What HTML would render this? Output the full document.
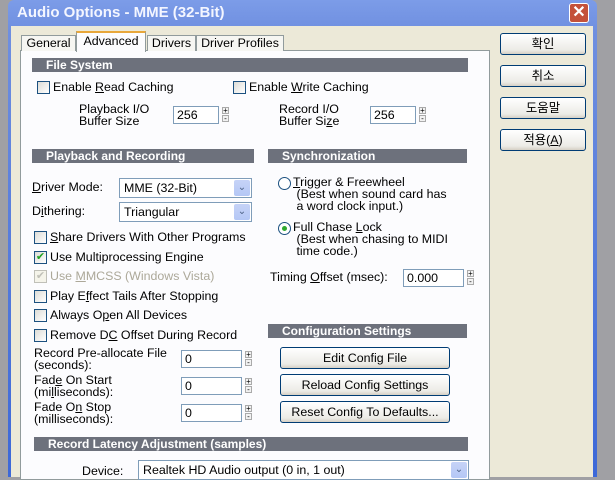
<!DOCTYPE html>
<html><head><style>
*{box-sizing:border-box}
body{margin:0;width:615px;height:477px;overflow:hidden;background:#a0a0a4;font-family:"Liberation Sans","Noto Sans CJK KR",sans-serif;font-size:12.4px;color:#000;position:relative}
.a{position:absolute;white-space:nowrap}
.hd{position:absolute;background:#6d717c;color:#fff;font-weight:bold;font-size:12px;padding-left:14px;line-height:14px;height:14px}
.cb{position:absolute;width:13px;height:13px;border:1px solid #1c5180;background:linear-gradient(135deg,#dcdcd7,#fff)}
.ed{position:absolute;background:#fff;border:1px solid #7f9db9;padding-left:3px;line-height:16px;height:18px}
.sp{position:absolute;width:7px;height:16px;font-size:8px;line-height:7px;text-align:center;color:#000}
.sp div{height:7px;border:1px solid #aaa;background:#f2f2f2;margin-bottom:1px;line-height:5px}
.btn{position:absolute;border:1px solid #003c74;border-radius:3px;background:linear-gradient(#fff,#ecebe6 80%,#d6d0c5);text-align:center;line-height:20px;height:22px}
.dd{position:absolute;background:#fff;border:1px solid #7f9db9;padding-left:4px;line-height:18px;height:20px}
.dd i{position:absolute;right:1px;top:1px;width:16px;height:16px;background:linear-gradient(#c6d3f7,#b4c7f5);border-radius:2px;font-style:normal;color:#4d6185;font-size:10px;text-align:center;line-height:16px}
.rd{position:absolute;width:13px;height:13px;border:1px solid #1c5180;border-radius:50%;background:#fff}
u{text-decoration:underline}
</style></head><body>
<div class="a" style="left:8px;top:0;width:589px;height:477px;border-radius:6px 6px 0 0;background:linear-gradient(#7c9ce8,#6f8fe0 30px,#3c68d8)"></div>
<div class="a" style="left:11px;top:26px;width:582px;height:451px;background:#ece9d8"></div>
<div class="a" style="left:17px;top:2px;color:#f4f6ff;font-weight:bold;font-size:15px;line-height:22px">Audio Options - MME (32-Bit)</div>
<div class="a" style="left:569px;top:3px;width:20px;height:20px;border:1px solid #fff;border-radius:3px;background:#c4513a;color:#fff;font-size:16px;font-weight:bold;text-align:center;line-height:18px">✕</div>
<div class="a" style="left:20px;top:50px;width:470px;height:430px;background:#fcfcfe;border:1px solid #919b9c"></div>
<div class="a" style="left:21px;top:35px;width:55px;height:16px;border:1px solid #919b9c;border-bottom:none;background:#f6f6f2;text-align:center;line-height:15px">General</div>
<div class="a" style="left:76px;top:31px;width:70px;height:21px;border:1px solid #919b9c;border-top:2px solid #e8a73a;border-bottom:none;background:#fcfcfe;text-align:center;line-height:17px">Advanced</div>
<div class="a" style="left:147px;top:35px;width:49px;height:16px;border:1px solid #919b9c;border-bottom:none;background:#f6f6f2;text-align:center;line-height:15px">Drivers</div>
<div class="a" style="left:196px;top:35px;width:88px;height:16px;border:1px solid #919b9c;border-bottom:none;background:#f6f6f2;text-align:center;line-height:15px">Driver Profiles</div>
<div class="btn" style="left:500px;top:33px;width:86px">확인</div>
<div class="btn" style="left:500px;top:65px;width:86px">취소</div>
<div class="btn" style="left:500px;top:97px;width:86px">도움말</div>
<div class="btn" style="left:500px;top:129px;width:86px">적용(<u>A</u>)</div>
<div class="hd" style="left:32px;top:58px;width:436px">File System</div>
<div class="cb" style="left:37px;top:81px"></div><div class="a" style="left:53px;top:80px">Enable <u>R</u>ead Caching</div>
<div class="cb" style="left:233px;top:81px"></div><div class="a" style="left:249px;top:80px">Enable <u>W</u>rite Caching</div>
<div class="a" style="left:79px;top:103px;line-height:12px">Playback I/O<br>Buffer Size</div>
<div class="ed" style="left:173px;top:106px;width:46px">256</div>
<div class="sp" style="left:222px;top:107px"><div>+</div><div>-</div></div>
<div class="a" style="left:279px;top:103px;line-height:12px">Record I/O<br>Buffer Si<u>z</u>e</div>
<div class="ed" style="left:370px;top:106px;width:46px">256</div>
<div class="sp" style="left:419px;top:107px"><div>+</div><div>-</div></div>
<div class="a" style="left:21px;top:128px;width:460px;height:10px;background:#fcfcfe"></div>
<div class="hd" style="left:32px;top:149px;width:222px">Playback and Recording</div>
<div class="a" style="left:32px;top:180px"><u>D</u>river Mode:</div>
<div class="dd" style="left:119px;top:178px;width:133px">MME (32-Bit)<i>⌄</i></div>
<div class="a" style="left:32px;top:204px">D<u>i</u>thering:</div>
<div class="dd" style="left:119px;top:202px;width:133px">Triangular<i>⌄</i></div>
<div class="cb" style="left:34px;top:231px"></div><div class="a" style="left:50px;top:230px"><u>S</u>hare Drivers With Other Programs</div>
<div class="cb" style="left:34px;top:251px;color:#21a121;font-size:11px;line-height:11px;text-align:center">✔</div><div class="a" style="left:50px;top:250px">Use Multiprocessing En<u>g</u>ine</div>
<div class="cb" style="left:34px;top:270px;border-color:#c0c0b8;background:#f5f4ea;color:#c0c0b8;font-size:11px;line-height:11px;text-align:center">✔</div><div class="a" style="left:50px;top:269px;color:#aca899">Use <u>M</u>MCSS (Windows Vista)</div>
<div class="cb" style="left:34px;top:290px"></div><div class="a" style="left:50px;top:289px">Play E<u>f</u>fect Tails After Stopping</div>
<div class="cb" style="left:34px;top:309px"></div><div class="a" style="left:50px;top:308px">Always O<u>p</u>en All Devices</div>
<div class="cb" style="left:34px;top:329px"></div><div class="a" style="left:50px;top:328px">Remove D<u>C</u> Offset During Record</div>
<div class="a" style="left:34px;top:347px;line-height:12px">Record Pre-allocate File<br>(seconds):</div>
<div class="ed" style="left:181px;top:350px;width:61px">0</div><div class="sp" style="left:245px;top:351px"><div>+</div><div>-</div></div>
<div class="a" style="left:34px;top:374px;line-height:12px">Fad<u>e</u> On Start<br>(mi<u>l</u>liseconds):</div>
<div class="ed" style="left:181px;top:377px;width:61px">0</div><div class="sp" style="left:245px;top:378px"><div>+</div><div>-</div></div>
<div class="a" style="left:34px;top:401px;line-height:12px">Fade O<u>n</u> Stop<br>(milliseconds):</div>
<div class="ed" style="left:181px;top:404px;width:61px">0</div><div class="sp" style="left:245px;top:405px"><div>+</div><div>-</div></div>
<div class="hd" style="left:268px;top:149px;width:199px">Synchronization</div>
<div class="rd" style="left:278px;top:177px"></div>
<div class="a" style="left:293px;top:176px;line-height:12px"><u>T</u>rigger &amp; Freewheel<br>&nbsp;(Best when sound card has<br>&nbsp;a word clock input.)</div>
<div class="rd" style="left:278px;top:222px"><div style="width:5px;height:5px;border-radius:50%;background:#2fa82f;margin:3px"></div></div>
<div class="a" style="left:293px;top:221px;line-height:12px">Full Chase <u>L</u>ock<br>&nbsp;(Best when chasing to MIDI<br>&nbsp;time code.)</div>
<div class="a" style="left:270px;top:270px">Timing <u>O</u>ffset (msec):</div>
<div class="ed" style="left:403px;top:269px;width:61px">0.000</div><div class="sp" style="left:467px;top:270px"><div>+</div><div>-</div></div>
<div class="hd" style="left:268px;top:324px;width:199px">Configuration Settings</div>
<div class="btn" style="left:280px;top:347px;width:170px">Edit Config File</div>
<div class="btn" style="left:280px;top:374px;width:170px">Reload Config Settings</div>
<div class="btn" style="left:280px;top:401px;width:170px">Reset Config To Defaults...</div>
<div class="hd" style="left:34px;top:437px;width:434px">Record Latency Adjustment (samples)</div>
<div class="a" style="left:82px;top:464px">Device:</div>
<div class="dd" style="left:138px;top:460px;width:331px">Realtek HD Audio output (0 in, 1 out)<i>⌄</i></div>
</body></html>
